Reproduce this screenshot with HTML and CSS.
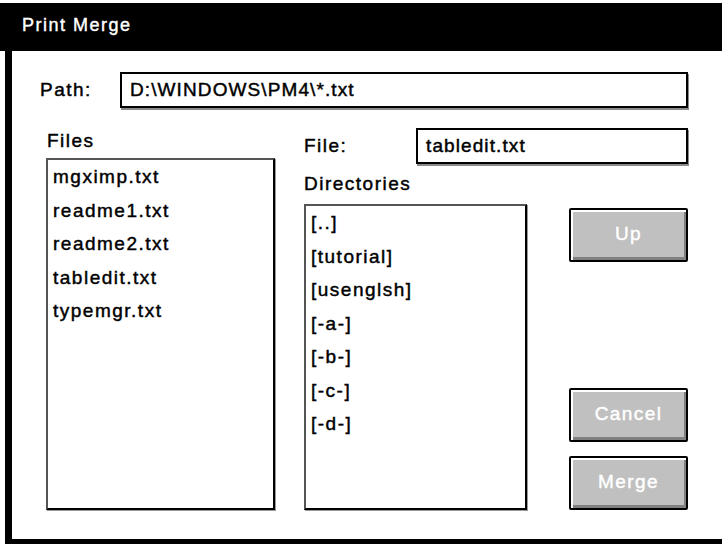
FILE: index.html
```html
<!DOCTYPE html>
<html>
<head>
<meta charset="utf-8">
<title>Print Merge</title>
<link rel="stylesheet" href="styles.css">
</head>
<body>
<div class="window">
  <div class="titlebar">Print Merge</div>
  <div class="content">
    <div class="path-row">
      <span class="path-label">Path:</span>
      <div class="field path-field">D:\WINDOWS\PM4\*.txt</div>
    </div>
    <div class="main">
      <div class="files-col">
        <div class="col-label">Files</div>
        <ul class="list files-list">
          <li>mgximp.txt</li>
          <li>readme1.txt</li>
          <li>readme2.txt</li>
          <li>tabledit.txt</li>
          <li>typemgr.txt</li>
        </ul>
      </div>
      <div class="right-col">
        <div class="file-row">
          <span class="file-label">File:</span>
          <div class="field file-field">tabledit.txt</div>
        </div>
        <div class="lower">
          <div class="dirs-col">
            <div class="dir-label">Directories</div>
            <ul class="list dirs-list">
              <li>[..]</li>
              <li>[tutorial]</li>
              <li>[usenglsh]</li>
              <li>[-a-]</li>
              <li>[-b-]</li>
              <li>[-c-]</li>
              <li>[-d-]</li>
            </ul>
          </div>
          <div class="buttons">
            <div class="btn">Up</div>
            <div class="btn-spacer"></div>
            <div class="btn">Cancel</div>
            <div class="btn">Merge</div>
          </div>
        </div>
      </div>
    </div>
  </div>
</div>
</body>
</html>
```
FILE: styles.css
```css
* { box-sizing: border-box; }
html, body {
  margin: 0;
  padding: 0;
  background: #fff;
  width: 722px;
  height: 546px;
  overflow: hidden;
}
body {
  font-family: "Liberation Sans", Arial, sans-serif;
  color: #000;
  padding-top: 3px;
}
.window {
  height: 541px;
  display: flex;
  flex-direction: column;
}
.titlebar {
  height: 48px;
  background: #000;
  color: #fff;
  font-size: 18px;
  letter-spacing: 1.5px;
  padding-left: 22px;
  line-height: 44px;
  -webkit-text-stroke: 0.4px #fff;
}
.content {
  flex: 1;
  margin-left: 5px;
  border-left: 7px solid #000;
  border-bottom: 5px solid #000;
  padding: 21px 34px 0 28px;
  font-size: 19px;
  letter-spacing: 1.5px;
  -webkit-text-stroke: 0.45px #000;
}
.path-row {
  display: flex;
  align-items: center;
  height: 36px;
}
.path-label {
  width: 80px;
  flex: none;
}
.field {
  height: 36px;
  border: 2px solid #000;
  box-shadow: 1px 2px 0 #8a8a8a;
  line-height: 32px;
  padding-left: 8px;
  letter-spacing: 1.1px;
  background: #fff;
}
.path-field { flex: 1; }
.main {
  display: flex;
  margin-top: 20px;
}
.files-col {
  margin-left: 6px;
  width: 229px;
  flex: none;
}
.col-label {
  height: 30px;
  line-height: 26px;
  padding-left: 1px;
}
.list {
  list-style: none;
  margin: 0;
  padding: 0 0 0 5px;
  border: 2px solid #000;
  border-top-color: #555;
  border-left-color: #555;
  box-shadow: 1px 1px 0 #999;
  background: #fff;
}
.list li {
  height: 33.5px;
  line-height: 33.5px;
  white-space: nowrap;
}
.files-list { height: 352px; }
.right-col {
  margin-left: 29px;
  flex: 1;
  display: flex;
  flex-direction: column;
}
.file-row {
  display: flex;
  align-items: center;
  height: 36px;
}
.file-label {
  width: 112px;
  flex: none;
}
.file-field { flex: 1; }
.lower {
  display: flex;
}
.dirs-col {
  width: 223px;
  flex: none;
}
.dir-label {
  height: 40px;
  line-height: 40px;
}
.dirs-list { height: 306px; }
.buttons {
  margin-left: 42px;
  width: 119px;
  flex: none;
  display: flex;
  flex-direction: column;
  gap: 14px;
  padding-top: 44px;
}
.btn-spacer { flex: 1; margin-bottom: -14px; }
.btn {
  height: 54px;
  background: #c0c0c0;
  color: #fff;
  text-align: center;
  line-height: 48px;
  border: 2px solid #000;
  border-radius: 2px;
  box-shadow: inset 2px 2px 0 #fff, inset -2px -3px 0 #808080;
  letter-spacing: 1.4px;
  -webkit-text-stroke: 0.45px #fff;
}
```
